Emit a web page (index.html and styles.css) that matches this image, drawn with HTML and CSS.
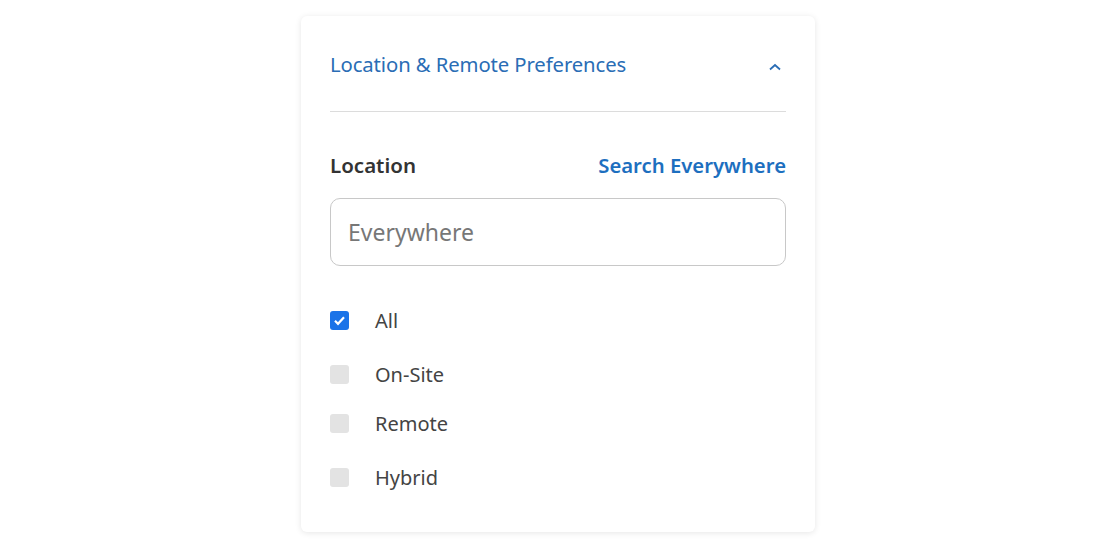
FILE: index.html
```html
<!DOCTYPE html>
<html>
<head>
<meta charset="utf-8">
<link rel="stylesheet" href="styles.css">
</head>
<body>
<div class="page">
  <div class="card">
    <div class="header">
      <span class="title">Location &amp; Remote Preferences</span>
      <svg class="chev" width="14" height="10" viewBox="0 0 14 10"><path d="M2 7.5 L7 3 L12 7.5" fill="none" stroke="#2a6db5" stroke-width="1.8"/></svg>
    </div>
    <div class="divider"></div>
    <div class="labelrow">
      <span class="label">Location</span>
      <span class="link">Search Everywhere</span>
    </div>
    <div class="input">Everywhere</div>
    <div class="options">
      <div class="opt first"><span class="box checked"><svg width="19" height="19" viewBox="0 0 19 19"><path d="M5 9.8 L8 12.8 L14 6.2" fill="none" stroke="#fff" stroke-width="2.2"/></svg></span><span class="optlabel">All</span></div>
      <div class="opt"><span class="box"></span><span class="optlabel">On-Site</span></div>
      <div class="opt"><span class="box"></span><span class="optlabel">Remote</span></div>
      <div class="opt"><span class="box"></span><span class="optlabel">Hybrid</span></div>
    </div>
  </div>
</div>
</body>
</html>
```
FILE: styles.css
```css
html, body { margin: 0; padding: 0; background: #fff; }
body { font-family: "Noto Sans", "Open Sans", sans-serif; width: 1118px; height: 548px; overflow: hidden; }
.page { display: flex; justify-content: center; padding-top: 16px; }
.card {
  width: 514px; box-sizing: border-box;
  padding: 1px 29px 45px 29px;
  border-radius: 6px; background: #fff;
  box-shadow: 0 1px 6px rgba(0,0,0,0.10);
  transform: translateX(-1px);
}
.header { display: flex; align-items: center; justify-content: space-between; height: 94px; padding-right: 4px; }
.title { font-size: 20.3px; color: #2a6db5; letter-spacing: -0.1px; }
.chev { margin-top: 6px; }
.divider { height: 1px; background: #dcdcdc; }
.labelrow { display: flex; justify-content: space-between; align-items: center; margin-top: 40px; height: 26px; }
.label { font-size: 20.5px; font-weight: 600; color: #333; }
.link { font-size: 20.3px; font-weight: 600; color: #1d6fbf; }
.input {
  margin-top: 20px; height: 68px; box-sizing: border-box;
  border: 1px solid #c8c8c8; border-radius: 10px;
  padding-left: 17px; display: flex; align-items: center;
  font-size: 23px; color: #777;
}
.options { display: flex; flex-direction: column; margin-top: 44px; }
.opt { display: flex; align-items: center; height: 20px; margin-bottom: 34px; }
.opt:nth-child(2) { margin-bottom: 29px; }
.opt:nth-child(3) { margin-bottom: 34px; }
.opt:last-child { margin-bottom: 0; }
.box { width: 19px; height: 19px; border-radius: 3px; background: #e3e3e3; display: inline-flex; }
.box.checked { background: #1a73e8; }
.optlabel { margin-left: 26px; font-size: 20px; color: #444; }
```
